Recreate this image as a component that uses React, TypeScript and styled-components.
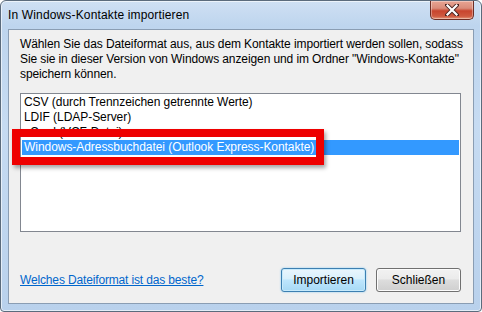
import React from "react";
import styled, { createGlobalStyle } from "styled-components";

const GlobalStyle = createGlobalStyle`
  html, body {
    margin: 0;
    padding: 0;
    background: #ffffff;
  }
  body {
    font-family: "Liberation Sans", "Noto Sans", sans-serif;
    font-size: 12px;
  }
`;

const Window = styled.div`
  width: 482px;
  height: 312px;
  box-sizing: border-box;
  display: flex;
  flex-direction: column;
  border: 1px solid #5b6b7c;
  border-radius: 6px 6px 4px 4px;
  background: linear-gradient(
    180deg,
    #cfe0f3 0%,
    #bed5ee 8%,
    #c6dbf2 40%,
    #b9d1ec 100%
  );
  box-shadow: inset 0 0 0 1px rgba(255, 255, 255, 0.6);
  overflow: hidden;
`;

const TitleBar = styled.div`
  height: 28px;
  display: flex;
  align-items: flex-start;
  padding-left: 7px;
`;

const Title = styled.div`
  font-family: "Liberation Sans", sans-serif;
  font-size: 12px;
  color: #000000;
  line-height: 28px;
  letter-spacing: 0.15px;
`;

const CloseButton = styled.div`
  margin-left: auto;
  margin-right: 7px;
  width: 44px;
  height: 19px;
  box-sizing: border-box;
  border: 1px solid #6d2d24;
  border-top: none;
  border-radius: 0 0 5px 5px;
  background: linear-gradient(
    180deg,
    #e8a493 0%,
    #d98c7a 40%,
    #c8452e 55%,
    #cf5a40 85%,
    #e59a7c 100%
  );
  box-shadow: inset 0 0 0 1px rgba(255, 255, 255, 0.35);
  display: flex;
  align-items: center;
  justify-content: center;
`;

const Client = styled.div`
  flex: 1;
  margin: 0 7px 7px 7px;
  border: 1px solid #8a9db3;
  background: #f0f0f0;
  display: flex;
  flex-direction: column;
  padding: 7px 12px 11px 11px;
`;

const Intro = styled.p`
  margin: 0;
  font-size: 12px;
  line-height: 15px;
  color: #000000;
  letter-spacing: -0.1px;
  white-space: nowrap;
`;

const ListBox = styled.div`
  position: relative;
  margin-top: 11px;
  width: 441px;
  height: 139px;
  box-sizing: border-box;
  border: 1px solid #828790;
  background: #ffffff;
  padding: 1px 1px;
`;

const ListItem = styled.div<{ $selected?: boolean }>`
  height: 15px;
  line-height: 15px;
  padding-left: 2px;
  font-size: 12px;
  letter-spacing: -0.05px;
  white-space: nowrap;
  color: ${(p) => (p.$selected ? "#ffffff" : "#000000")};
  background: ${(p) => (p.$selected ? "#3399ff" : "transparent")};
`;

const Highlight = styled.div`
  position: absolute;
  left: -9px;
  top: 35px;
  width: 312px;
  height: 36px;
  box-sizing: border-box;
  border: 8px solid #ee0000;
  box-shadow: 2px 3px 4px rgba(0, 0, 0, 0.35);
  pointer-events: none;
`;

const Footer = styled.div`
  margin-top: auto;
  display: flex;
  align-items: center;
`;

const HelpLink = styled.a`
  color: #0066cc;
  text-decoration: underline;
  font-size: 12px;
  letter-spacing: -0.15px;
  cursor: pointer;
`;

const Buttons = styled.div`
  margin-left: auto;
  display: flex;
  gap: 10px;
`;

const Button = styled.button<{ $default?: boolean }>`
  width: 85px;
  height: 24px;
  box-sizing: border-box;
  font-family: "Liberation Sans", sans-serif;
  font-size: 12px;
  color: #000000;
  border-radius: 3px;
  padding: 0;
  border: 1px solid ${(p) => (p.$default ? "#3c7fb1" : "#707070")};
  background: ${(p) =>
    p.$default
      ? "linear-gradient(180deg, #eaf6fd 0%, #d9f0fc 45%, #bee6fd 50%, #a7d9f5 100%)"
      : "linear-gradient(180deg, #f2f2f2 0%, #ebebeb 45%, #dddddd 50%, #cfcfcf 100%)"};
  box-shadow: ${(p) =>
    p.$default
      ? "inset 0 0 0 1px #c6eafc, 0 0 2px #7fc4ee"
      : "inset 0 0 0 1px #fcfcfc"};
`;

const items = [
  "CSV (durch Trennzeichen getrennte Werte)",
  "LDIF (LDAP-Server)",
  "vCard (VCF-Datei)",
  "Windows-Adressbuchdatei (Outlook Express-Kontakte)",
];

export default function App() {
  const [selected, setSelected] = React.useState(3);

  return (
    <>
      <GlobalStyle />
      <Window>
        <TitleBar>
          <Title>In Windows-Kontakte importieren</Title>
          <CloseButton>
            <svg width="14" height="12" viewBox="0 0 14 12">
              <path
                d="M2 1 L12 11 M12 1 L2 11"
                stroke="#4a2420"
                strokeWidth="4"
                strokeLinecap="square"
              />
              <path
                d="M2.5 1.5 L11.5 10.5 M11.5 1.5 L2.5 10.5"
                stroke="#ffffff"
                strokeWidth="2.2"
                strokeLinecap="square"
              />
            </svg>
          </CloseButton>
        </TitleBar>
        <Client>
          <Intro>
            Wählen Sie das Dateiformat aus, aus dem Kontakte importiert werden sollen, sodass
            <br />
            Sie sie in dieser Version von Windows anzeigen und im Ordner "Windows-Kontakte"
            <br />
            speichern können.
          </Intro>
          <ListBox>
            {items.map((item, i) => (
              <ListItem
                key={item}
                $selected={i === selected}
                onClick={() => setSelected(i)}
              >
                {item}
              </ListItem>
            ))}
            <Highlight />
          </ListBox>
          <Footer>
            <HelpLink>Welches Dateiformat ist das beste?</HelpLink>
            <Buttons>
              <Button $default>Importieren</Button>
              <Button>Schließen</Button>
            </Buttons>
          </Footer>
        </Client>
      </Window>
    </>
  );
}
